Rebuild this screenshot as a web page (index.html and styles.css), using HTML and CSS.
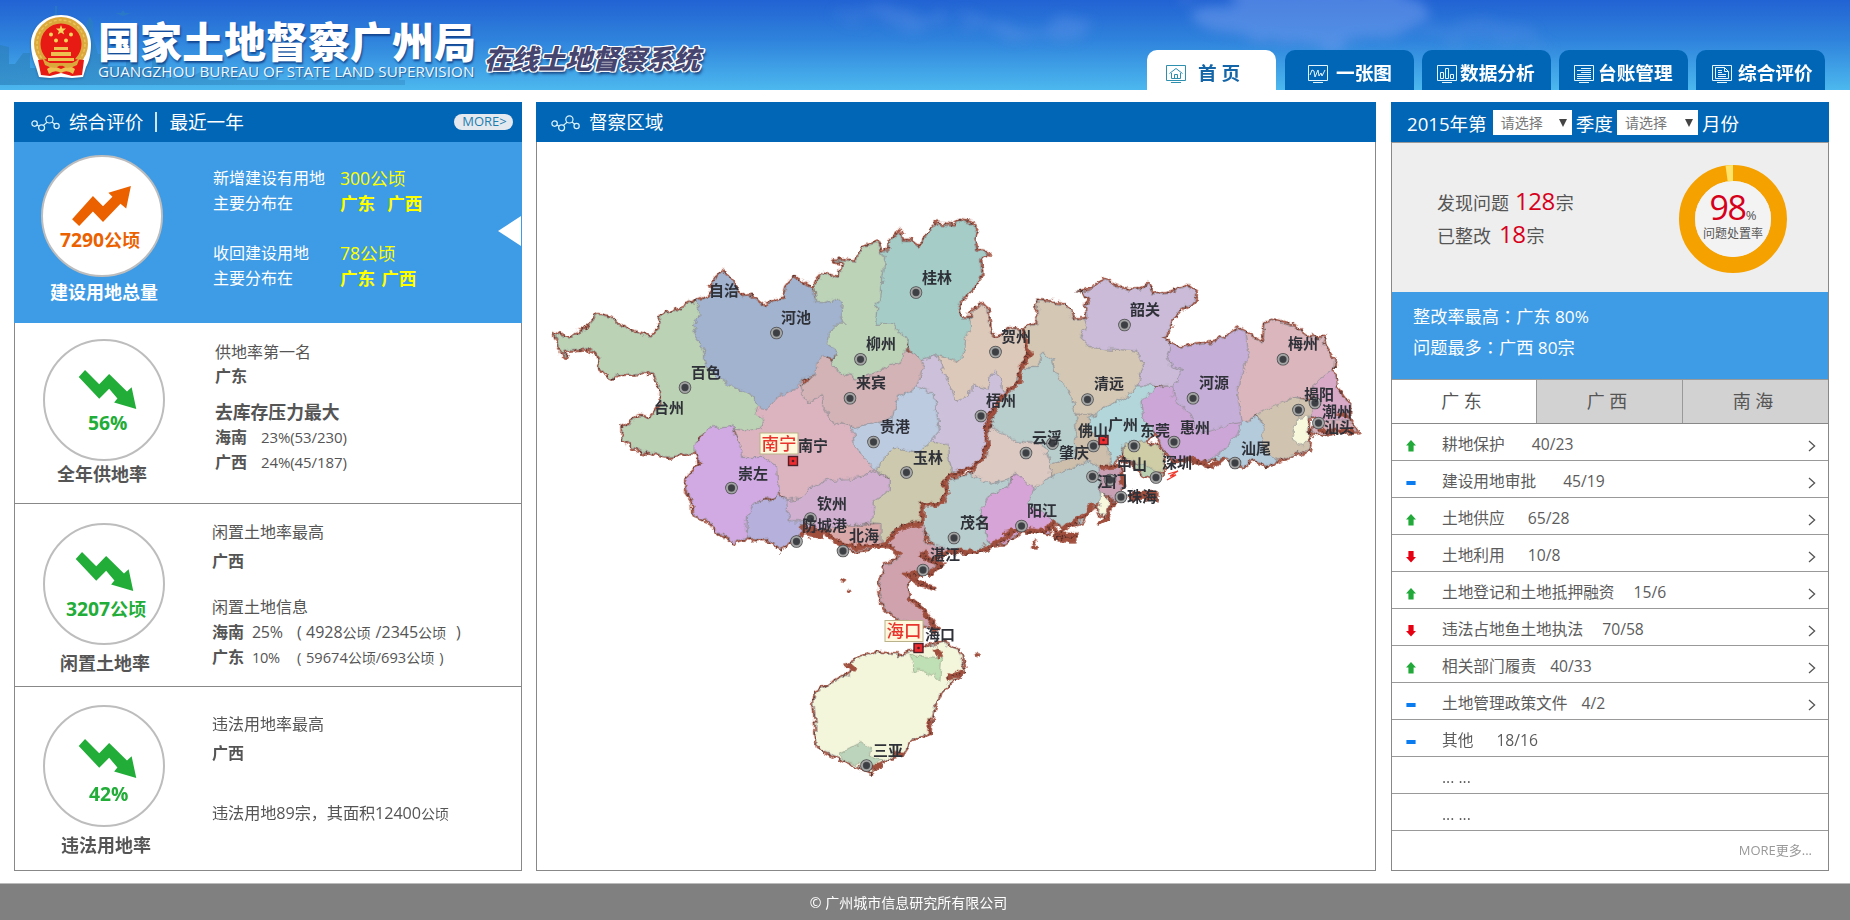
FILE: index.html
```html
<!DOCTYPE html>
<html lang="zh-CN">
<head>
<meta charset="utf-8">
<title>在线土地督察系统</title>
<link rel="stylesheet" href="styles.css">
</head>
<body>
<svg class="defs" width="0" height="0" aria-hidden="true">
  <defs>
    <symbol id="up" viewBox="0 0 175 119"><path d="M0 99 62 30 92 60 120 32 108 20 175 0 161 67 144 53 92 107 62 76 21 119Z"/></symbol>
    <symbol id="down" viewBox="0 0 174 118"><path d="M19 0 62 43 92 12 146 65 160 52 174 118 107 98 117 86 92 57 62 87 0 21Z"/></symbol>
    <symbol id="nodes" viewBox="0 0 29 17"><g fill="none" stroke="#d9f3ff" stroke-width="1.2"><circle cx="3.6" cy="8.6" r="2.7"/><circle cx="10.6" cy="12.8" r="3"/><circle cx="18.4" cy="4.4" r="3.6"/><circle cx="25.6" cy="11" r="2.6"/><path d="M6 10l2 1.2M12.4 10.4l3.6-3.2M21 7l2.8 2.4"/></g></symbol>
    <symbol id="chev" viewBox="0 0 8 12"><path d="M1 1l5.6 5L1 11" fill="none" stroke="#555" stroke-width="1.3"/></symbol>
    <symbol id="s-up" viewBox="0 0 10 12"><path d="M5 0l5 5.5H7.6V11.5H2.4V5.5H0z" fill="#22a93a"/></symbol>
    <symbol id="s-down" viewBox="0 0 10 12"><path d="M5 11.5l5-5.5H7.6V0H2.4V6H0z" fill="#e60012"/></symbol>
    <symbol id="s-flat" viewBox="0 0 10 12"><path d="M.4 4h9.2v4H.4z" fill="#0a7cf0"/></symbol>
  </defs>
</svg>

<header class="banner">
  <svg class="sky" width="1850" height="90" viewBox="0 0 1850 90">
    <defs>
      <linearGradient id="skyfill" x1="0" y1="0" x2="0" y2="1"><stop offset="0" stop-color="#2263d3"/><stop offset=".45" stop-color="#2f83dc"/><stop offset="1" stop-color="#4cb8ee"/></linearGradient>
      <linearGradient id="city" gradientUnits="userSpaceOnUse" x1="0" y1="0" x2="430" y2="0"><stop offset="0" stop-color="#2b7fb8" stop-opacity=".62"/><stop offset="1" stop-color="#2f86c0" stop-opacity=".42"/></linearGradient>
      <filter id="cloud" x="-20%" y="-60%" width="140%" height="220%"><feTurbulence type="fractalNoise" baseFrequency=".02 .05" numOctaves="4" seed="4"/><feDisplacementMap in="SourceGraphic" scale="40"/><feGaussianBlur stdDeviation="6"/></filter>
    </defs>
    <rect width="1850" height="90" fill="url(#skyfill)"/>
    <g filter="url(#cloud)" fill="#6f9bec" opacity=".55">
      <ellipse cx="1310" cy="14" rx="120" ry="28"/><ellipse cx="1030" cy="30" rx="70" ry="6" opacity=".6"/><ellipse cx="1480" cy="34" rx="60" ry="9" opacity=".4"/><ellipse cx="890" cy="16" rx="60" ry="5" opacity=".5"/>
    </g>
    <g fill="url(#city)">
      <path d="M0 45l9 2v17h6l8-11h7v15h26V50l4-12h5V25h4v13l6 10v10h10V30l2-8 3-5 3 5v14l5 18h10v12h18V54h12v14h14V58h14v20h24l10-6 9 8h12v-6h16v6h30l4-7 7 7h18l2-10h7v10h12v-9h6v9h14l3-7h17v7h14l2-7h26v7h6v5H0z"/>
      <path d="M55 6h2v9h8v2H52v-2h3zM115 13h6l2-3 2 3h6l-8 3z"/>
    </g>
  </svg>
  <div class="brand">
    <svg class="emblem" width="62" height="66" viewBox="0 0 62 66">
      <path d="M31 1C14 1 1 14 1 30c0 10 3 18 5 23l3 10 11 1 11-1 11 1 11-1 3-10c3-5 5-13 5-23C61 14 48 1 31 1z" fill="#fff"/>
      <circle cx="31" cy="30" r="27" fill="#dba83c"/>
      <circle cx="31" cy="30" r="24" fill="none" stroke="#ecc45a" stroke-width="1.500" stroke-dasharray="3 2"/>
      <circle cx="31" cy="30" r="20.500" fill="#e81a14"/>
      <path d="M8 46l10-1 13 7 13-7 10 1-2 15-10 1-11-3-11 3-9-1z" fill="#e81a14"/>
      <path d="M17 55q5-5 14 0 9-5 14 0l-2 5q-6-5-12-1-6-4-12 1zM18 44h26v3H18zM21 38h20v4H21zM24 33h14v3H24z" fill="#eec04f"/>
      <path d="M12 43q3 4 8 6l22 0q5-2 8-6l-3 8q-5 3-10 3l-6-3-6 3q-5 0-10-3z" fill="#dba83c"/>
      <path d="M31 11l1.300 3.600h3.800l-3 2.300 1.100 3.700-3.200-2.200-3.200 2.200 1.100-3.700-3-2.300h3.800z" fill="#f7d55c"/>
      <g fill="#f7d55c"><circle cx="21" cy="20.500" r="2"/><circle cx="41" cy="20.500" r="2"/><circle cx="26" cy="26.500" r="2"/><circle cx="36" cy="26.500" r="2"/></g>
    </svg>
    <div class="names">
      <h1 class="org">国家土地督察广州局</h1>
      <p class="org-en">GUANGZHOU BUREAU OF STATE LAND SUPERVISION</p>
    </div>
    <p class="system">在线土地督察系统</p>
  </div>
  <nav class="nav">
    <a class="tab tab-home active"><svg width="20" height="19" viewBox="0 0 20 19" class="ico"><path d="M.5.5h19v15H.5zM5 17.500h10M3.500 8.500L10 3.500l6.500 5M5.500 8v5.500h9V8M8.500 13.500v-4h3v4"/></svg><span>首 页</span></a>
    <a class="tab tab-map"><svg width="20" height="19" viewBox="0 0 20 19" class="ico"><path d="M.5.5h19v15H.5zM5 17.500h10M2 10l2-5 2 1 1 6 3-7 1 6 2-3 1 3 3-6"/></svg><span>一张图</span></a>
    <a class="tab tab-data"><svg width="20" height="19" viewBox="0 0 20 19" class="ico"><path d="M.5.5h19v15H.5zM5 17.500h10M3.500 7.500h3v6h-3zM8.500 3.500h3v10h-3zM13.500 9.500h3v4h-3z"/></svg><span>数据分析</span></a>
    <a class="tab tab-book"><svg width="20" height="19" viewBox="0 0 20 19" class="ico"><path d="M.5.5h19v15H.5zM5 17.500h10M7 3.500h10M3 5.500h14M7 7.500h10M3 9.500h14M3 11.500h14M3 13.500h14"/></svg><span>台账管理</span></a>
    <a class="tab tab-eval"><svg width="20" height="19" viewBox="0 0 20 19" class="ico"><path d="M.5.5h19v15H.5zM5 17.500h10M3.500 2.500h9l4 4v7h-13zM12.500 2.500v4h4M6 5.500h4M6 7.500h4M6 9.500h8M6 11.500h8"/></svg><span>综合评价</span></a>
  </nav>
</header>

<main class="board">
  <section class="panel evaluation">
    <div class="bar"><svg width="29" height="17" class="nodes"><use href="#nodes"/></svg><h2>综合评价</h2><i class="rule"></i><h2>最近一年</h2><a class="more">MORE&gt;</a></div>

    <article class="metric m1">
      <div class="gauge"><div class="ring"><svg class="trend" width="59" height="40"><use href="#up"/></svg><b class="val">7290<em>公顷</em></b></div><h3>建设用地总量</h3></div>
      <div class="facts">
        <p><span class="k">新增建设有用地</span><span class="v">300公顷</span></p>
        <p><span class="k">主要分布在</span><b class="v">广东<i></i>广西</b></p>
        <p class="gap25"><span class="k">收回建设用地</span><span class="v">78公顷</span></p>
        <p><span class="k">主要分布在</span><b class="v near">广东<i></i>广西</b></p>
      </div>
      <svg class="pointer" width="23" height="30" viewBox="0 0 23 30"><path d="M0 15L23 0v30z" fill="#fff"/></svg>
    </article>

    <article class="metric m2">
      <div class="gauge"><div class="ring"><svg class="trend" width="59" height="39"><use href="#down"/></svg><b class="val">56%</b></div><h3>全年供地率</h3></div>
      <div class="facts">
        <p>供地率第一名</p>
        <p class="tight"><b>广东</b></p>
        <p class="big"><b>去库存压力最大</b></p>
        <p><b>海南</b><span class="num">23%(53/230)</span></p>
        <p><b>广西</b><span class="num">24%(45/187)</span></p>
      </div>
    </article>

    <article class="metric m3">
      <div class="gauge"><div class="ring"><svg class="trend" width="59" height="39"><use href="#down"/></svg><b class="val">3207<em>公顷</em></b></div><h3>闲置土地率</h3></div>
      <div class="facts">
        <p>闲置土地率最高</p>
        <p class="gap4"><b>广西</b></p>
        <p class="gap21">闲置土地信息</p>
        <p><b>海南</b><span class="rate">25%</span><span class="l">(</span><span>4928<small>公顷</small></span><span class="s1">/2345<small>公顷</small></span><span class="r">)</span></p>
        <p class="fine"><b>广东</b><span class="rate">10%</span><span class="l">(</span><span>59674<small>公顷</small>/693<small>公顷</small></span><span class="r">)</span></p>
      </div>
    </article>

    <article class="metric m4">
      <div class="gauge"><div class="ring"><svg class="trend" width="59" height="39"><use href="#down"/></svg><b class="val">42%</b></div><h3>违法用地率</h3></div>
      <div class="facts">
        <p>违法用地率最高</p>
        <p class="gap4"><b>广西</b></p>
        <p class="gap35">违法用地89宗，其面积12400<small>公顷</small></p>
      </div>
    </article>
  </section>

  <section class="panel region">
    <div class="bar"><svg width="29" height="17" class="nodes"><use href="#nodes"/></svg><h2>督察区域</h2></div>
    <svg class="map" width="838" height="728" viewBox="537 142 838 728">
      <defs>
        <filter id="rough" x="-5%" y="-5%" width="110%" height="110%"><feTurbulence type="fractalNoise" baseFrequency=".13" numOctaves="3" seed="7"/><feDisplacementMap in="SourceGraphic" scale="8" xChannelSelector="R" yChannelSelector="G"/></filter>
        <g id="areas">
          <g transform="translate(540 200) scale(.33333)">
            <path fill="#bcd2b4" d="M42 398L85 413 140 380 172 342 210 350 235 375 325 410 358 385 360 345 440 315 465 300 480 340 455 378 470 410 490 460 500 505 550 545 600 570 640 590 650 620 645 640 670 660 665 680 620 690 580 685 575 672 500 685 470 710 465 755 385 768 300 752 245 715 245 680 300 645 325 655 358 615 360 570 340 515 235 520 215 530 180 515 170 460 145 445 75 450 72 465 50 430Z"/>
            <path fill="#a2b3cf" d="M465 300L500 290 525 255 510 250 545 212 570 240 600 290 630 285 665 315 730 295 735 260 760 230 815 265 825 305 855 305 890 295 905 310 900 340 910 370 885 370 865 405 860 430 890 450 875 475 850 465 830 480 825 520 780 540 770 560 710 590 680 625 650 620 640 590 600 570 550 545 500 505 490 460 470 410 455 378 480 340Z"/>
            <path fill="#bcd3b8" d="M820 260L840 220 895 232 905 185 880 178 945 185 965 140 1010 125 1020 158 1035 165 1025 240 1020 290 1008 310 1005 370 1060 370 1080 400 1105 415 1095 450 1085 485 1050 490 1000 520 950 532 900 520 875 485 890 450 860 430 865 405 885 370 910 370 900 340 905 310 890 295 855 305 825 305Z"/>
            <path fill="#a5ccc6" d="M1020 158L1045 145 1045 125 1075 92 1085 120 1110 120 1135 138 1160 100 1190 68 1240 75 1258 60 1290 68 1308 80 1298 110 1308 150 1345 155 1318 170 1322 225 1295 265 1265 295 1252 320 1258 352 1290 352 1292 385 1275 410 1270 460 1250 480 1190 465 1140 480 1105 440 1105 415 1080 400 1060 370 1005 370 1008 310 1020 290 1025 240 1035 165Z"/>
            <path fill="#ddc9ba" d="M1290 352L1290 335 1325 312 1340 325 1350 405 1375 408 1405 385 1450 385 1455 430 1468 460 1440 500 1435 545 1415 570 1385 570 1380 530 1365 510 1345 530 1340 565 1305 555 1250 605 1230 560 1210 510 1190 465 1250 480 1270 460 1275 410 1292 385Z"/>
            <path fill="#cdc0da" d="M1140 480L1190 465 1210 510 1230 560 1250 605 1305 555 1340 565 1345 530 1365 510 1380 530 1385 570 1415 570 1360 620 1340 660 1335 730 1320 770 1290 795 1235 815 1220 730 1170 720 1195 690 1180 580 1130 560 1150 500Z"/>
            <path fill="#d3b3b6" d="M830 480L850 465 875 485 900 520 950 532 1000 520 1050 490 1085 485 1090 450 1110 450 1140 480 1150 500 1130 560 1070 590 1055 650 990 670 935 680 875 665 850 625 845 585 795 605 780 560 825 520Z"/>
            <path fill="#dbb4c0" d="M780 540L780 560 795 605 845 585 850 625 875 665 935 680 940 730 975 780 1005 808 960 830 910 840 860 840 810 860 785 890 740 900 715 870 710 800 670 770 605 770 600 735 580 685 620 690 665 680 670 660 645 640 650 620 680 625 710 590 770 560Z"/>
            <path fill="#bccbe0" d="M935 680L990 670 1055 650 1070 590 1130 560 1180 580 1195 690 1170 720 1130 755 1060 740 1030 770 1005 808 975 780 940 730Z"/>
            <path fill="#ccc9ae" d="M1060 740L1130 755 1170 720 1220 730 1235 815 1210 850 1220 890 1200 912 1145 910 1145 965 1065 985 1045 1030 1020 1020 1020 968 995 965 1000 900 1045 870 1045 830 1005 808 1030 770Z"/>
            <path fill="#d0afd0" d="M740 900L785 890 810 860 860 840 960 830 1005 808 1045 835 1045 870 1000 900 995 965 900 975 860 985 790 985 780 960 745 960Z"/>
            <path fill="#b6b0dc" d="M615 1015L620 940 635 910 700 895 715 880 740 900 745 960 780 960 785 1000 745 1020 720 1045 680 1015Z"/>
            <path fill="#d9a8a8" d="M860 985L900 975 1020 968 1020 1020 985 1045 930 1050 880 1020Z"/>
            <path fill="#d1aae3" d="M465 730L500 685 575 672 580 700 600 735 605 770 670 770 710 800 715 880 635 910 620 940 615 1015 580 1025 520 985 515 965 460 945 458 900 435 870 440 830 480 790 465 755Z"/>
          </g>
          <g transform="translate(940 200) scale(.33333)">
            <path fill="#d4c7b4" d="M290 300L375 310 395 355 440 355 420 410 450 440 590 450 608 495 590 555 560 590 500 615 460 640 405 640 395 590 370 550 340 510 335 475 305 460 290 500 240 500 268 460 255 430 250 385 290 370Z"/>
            <path fill="#cbbbd8" d="M420 275L450 270 485 235 520 255 560 268 600 268 620 252 635 280 680 280 740 258 765 275 765 300 720 325 695 360 680 395 662 405 690 430 680 460 690 500 730 510 695 555 590 555 608 495 590 450 450 440 420 410 440 355 435 310 450 290Z"/>
            <path fill="#c5aed7" d="M690 430L720 440 820 425 895 385 915 395 925 460 905 520 890 580 905 665 870 670 830 700 780 700 750 640 700 590 695 555 730 510 690 500 680 460Z"/>
            <path fill="#dbb7bd" d="M915 395L965 430 975 370 1000 358 1060 375 1100 410 1155 408 1145 430 1180 480 1178 505 1120 550 1115 590 1060 590 1000 620 950 640 905 665 890 580 905 520 925 460Z"/>
            <path fill="#d8aac8" d="M1178 505L1185 560 1225 610 1225 660 1140 665 1105 640 1115 590 1120 550Z"/>
            <path fill="#d0c4b0" d="M950 640L1060 590 1115 600 1110 650 1070 655 1055 715 1110 725 1105 745 1010 780 965 750 965 670Z"/>
            <path fill="#f7f8dc" d="M1070 650L1105 645 1100 690 1110 720 1080 735 1055 715Z"/>
            <path fill="#d8b0ba" d="M1140 660L1225 660 1250 692 1190 690 1130 705 1110 690Z"/>
            <path fill="#b4cbdc" d="M800 780L850 745 895 690 905 665 950 645 970 680 965 750 1010 780 975 795 940 770 905 800 850 765Z"/>
            <path fill="#cca6d6" d="M600 600L640 560 695 555 700 590 750 640 780 700 870 670 905 665 895 690 850 745 800 780 700 780 670 750 640 690 605 650Z"/>
            <path fill="#b3d6da" d="M460 640L500 615 560 590 590 555 635 555 640 570 600 600 605 650 640 690 620 720 550 730 540 760 510 795 500 740 450 690 440 650Z"/>
            <path fill="#b8cecd" d="M150 680L170 610 215 570 240 500 290 500 305 460 335 475 340 510 370 550 395 590 405 640 405 680 405 715 400 770 330 790 305 730 230 720 170 700Z"/>
            <path fill="#dcc9c2" d="M150 680L230 720 305 730 330 790 325 830 280 865 225 815 210 835 150 850 90 820 140 765Z"/>
            <path fill="#cdbfac" d="M405 640L460 640 440 650 450 690 500 740 510 800 475 800 440 780 400 800 325 830 330 790 400 770 405 710Z"/>
            <path fill="#b7cbcd" d="M325 830L400 800 440 780 475 800 475 850 480 900 440 935 430 960 370 980 330 950 260 910 280 865Z"/>
            <path fill="#c8a0b4" d="M475 800L540 800 545 860 520 900 480 870Z"/>
            <path fill="#f7f8dc" d="M482 870L507 905 492 945 470 935Z"/>
            <path fill="#cfcda6" d="M550 730L620 720 665 750 670 810 640 820 600 790 545 775Z"/>
            <path fill="#b9cfb0" d="M575 790L600 790 665 820 640 838 610 825Z"/>
            <path fill="#d6a4d6" d="M225 815L280 865 260 910 330 950 325 1000 250 985 190 1030 150 1035 135 990 120 930 150 880 200 860Z"/>
            <path fill="#b7cdce" d="M90 820L150 850 210 835 200 860 150 880 120 930 145 1030 100 1050 30 1050-20 1040-55 970-55 910 0 910 20 880 15 840Z"/>
          </g>
          <g transform="translate(740 500) scale(.33333)">
            <path fill="#cfa2ad" d="M470 80L545 70 555 130 620 140 600 180 555 215 500 240 505 290 545 330 575 380 470 355 430 320 415 270 430 190 470 180 475 150 440 125Z"/>
            <path fill="#f4f6dc" d="M605 425L660 460 670 515 625 545 600 570 575 640 570 690 510 720 485 760 425 780 390 815 310 780 230 740 220 600 225 575 340 510 320 490 400 455 475 465 535 445Z"/>
          </g>
        </g>
      </defs>
      <g filter="url(#rough)" transform="translate(.8 .8)">
        <use href="#areas" stroke="#a85644" stroke-width="13" stroke-linejoin="round"/>
        <use href="#areas" stroke="#5a3029" stroke-width="11" stroke-dasharray="4 13"/>
        <use href="#areas" stroke="#8f8f94" stroke-width="2.200"/>
        <g transform="translate(740 500) scale(.33333)" stroke="#8f9a80" stroke-width="2"><path fill="#bfdfb5" d="M505 465L605 470 600 540 545 510 520 510Z"/><path fill="#bcd4bc" d="M295 760L340 735 360 725 390 745 385 765 425 775 385 800 310 780Z"/></g>
        <g id="coast" fill="none" stroke="#a04f3e" stroke-linejoin="round" transform="translate(940 200) scale(.33333)">
          <path stroke-width="13" d="M250 385L255 430 268 460 240 500 235 545 180 590 150 640 135 680 140 730 120 780 90 800 30 825 10 845 20 880 0 910-55 910-55 965-130 985-145 1010-175 1030"/>
          <path stroke-width="14" d="M-415 970L-390 1000-350 985-320 1020-260 1040-200 1035-150 1040-120 1060M-55 1050L-30 1080 0 1060 60 1050 110 1055 150 1035 200 1010 220 990M190 1000L240 985 310 995 340 960 345 1010 400 1000M340 1010L390 970 440 940 455 910M520 900L500 950 470 970M480 800L540 795 550 860M690 780L760 775 810 800 850 770M1130 690L1240 690M1190 640L1225 650"/>
          <path stroke-width="30" d="M570 885L650 885M350 1010L410 1010M-420 990L-350 1000"/>
        </g>
        <g fill="none" stroke="#a04f3e" transform="translate(740 500) scale(.33333)">
          <path stroke-width="16" d="M540 160L565 180 600 190 570 220 500 220 530 245 585 265M500 290L540 320 570 360 590 390M585 440L600 470M320 490L345 510M620 530L670 515M565 650L565 700M385 800L425 795M460 760L490 760"/>
          <path stroke-width="14" d="M302 235L312 245M704 468L716 458M322 264L326 270M875 120L885 124M874 138L888 140"/>
        </g>
        <g fill="none" stroke="#4a2a26" stroke-width="5" stroke-dasharray="4 9" transform="translate(940 200) scale(.33333)">
          <path d="M246 385L251 430 264 460 236 500 231 545 176 590 146 640 131 680 136 730 116 780 86 800 26 825 6 845 16 880-4 906-59 906-59 961-134 981-149 1006"/>
          <path d="M-415 966L-390 996-350 981-320 1016-260 1036-200 1031-150 1036M-55 1054L-30 1084 0 1064 60 1054 110 1059 150 1039 200 1014M190 1004L240 989 310 999 340 964 345 1014 400 1004M340 1014L390 974 440 944M520 904L500 954M480 796L540 791M690 784L760 779 810 804M1130 694L1240 694M570 880L650 890M350 1014L410 1006"/>
          <path d="M-60 1064L-35 1084 0 1094-30 1124-100 1120-70 1145-15 1165M-100 1190L-60 1220-30 1260-10 1290M20 1430L70 1415M-35 1550L-35 1600"/>
        </g>
      </g>
      <g class="cities">
        <g class="dot">
          <g id="dots"><circle cx="916" cy="292.500"/><circle cx="776.500" cy="333"/><circle cx="860.500" cy="359.300"/><circle cx="685" cy="387.500"/><circle cx="850" cy="398.300"/><circle cx="873.500" cy="442"/><circle cx="906.500" cy="472.500"/><circle cx="731.500" cy="488"/><circle cx="810.500" cy="518.500"/><circle cx="796.500" cy="541.500"/><circle cx="843" cy="551"/><circle cx="954" cy="538"/><circle cx="923" cy="570"/><circle cx="995.500" cy="352"/><circle cx="981" cy="416"/><circle cx="1124.500" cy="325"/><circle cx="1087.500" cy="399.500"/><circle cx="1193" cy="398.300"/><circle cx="1283" cy="359.300"/><circle cx="1298.500" cy="410"/><circle cx="1315" cy="403"/><circle cx="1318.500" cy="423"/><circle cx="1026" cy="453"/><circle cx="1052.500" cy="443.500"/><circle cx="1093.500" cy="446"/><circle cx="1134" cy="446"/><circle cx="1174" cy="442"/><circle cx="1235" cy="463"/><circle cx="1092.500" cy="476.500"/><circle cx="1110" cy="480"/><circle cx="1156" cy="477.500"/><circle cx="1021.500" cy="526"/><circle cx="1121" cy="497"/><circle cx="866.500" cy="765.500"/></g>
        </g>
        <use href="#dots" class="dot-face"/>
        <g class="seat"><rect x="788.500" y="456.500" width="9" height="9"/><rect x="1099" y="435.500" width="9" height="9"/><rect x="914" y="643.500" width="9" height="9"/></g>
        <g fill="#4a2128"><circle cx="793" cy="461" r="1.300"/><circle cx="1103.500" cy="440" r="1.300"/><circle cx="918.500" cy="648" r="1.300"/></g>
      </g>
      <path d="M1168 474l10-3-8 5 6-1-9 5" fill="none" stroke="#f03a2e" stroke-width="1.300"/>
      <g class="names-map">
        <text x="922" y="283">桂林</text><text x="709" y="296">自治</text><text x="781" y="323">河池</text><text x="866" y="349">柳州</text><text x="691" y="378">百色</text><text x="654" y="413">台州</text><text x="856" y="388">来宾</text><text x="880" y="432">贵港</text><text x="798" y="451">南宁</text><text x="913" y="463">玉林</text><text x="738" y="479">崇左</text><text x="817" y="509">钦州</text><text x="802" y="531">防城港</text><text x="849" y="541">北海</text><text x="960" y="528">茂名</text><text x="930" y="560">湛江</text><text x="1001" y="342">贺州</text><text x="986" y="406">梧州</text><text x="1130" y="315">韶关</text><text x="1094" y="389">清远</text><text x="1199" y="388">河源</text><text x="1288" y="349">梅州</text><text x="1304" y="400">揭阳</text><text x="1322" y="417">潮州</text><text x="1324" y="433">汕头</text><text x="1108" y="430">广州</text><text x="1078" y="436">佛山</text><text x="1032" y="443">云浮</text><text x="1059" y="458">肇庆</text><text x="1140" y="436">东莞</text><text x="1180" y="433">惠州</text><text x="1241" y="454">汕尾</text><text x="1117" y="470">中山</text><text x="1162" y="468">深圳</text><text x="1097" y="487">江门</text><text x="1127" y="502">珠海</text><text x="1027" y="516">阳江</text><text x="925" y="640">海口</text><text x="873" y="756">三亚</text>
      </g>
      <g class="flags">
        <rect x="760" y="433" width="38" height="21"/><text x="761.500" y="449.500">南宁</text>
        <rect x="885" y="620.500" width="38" height="21"/><text x="886.500" y="637">海口</text>
      </g>
    </svg>
  </section>

  <section class="panel progress">
    <div class="bar"><span>2015年第</span><span class="select s-a">请选择<i></i></span><span>季度</span><span class="select s-b">请选择<i></i></span><span>月份</span></div>
    <div class="summary">
      <div class="found"><p>发现问题<strong>128</strong>宗</p><p>已整改<strong class="wide">18</strong>宗</p></div>
      <div class="donut">
        <svg width="108" height="108" viewBox="0 0 108 108"><circle cx="54" cy="54" r="46" fill="none" stroke="#f5a100" stroke-width="16"/><circle cx="54" cy="54" r="38" fill="#f3f3f3"/><path d="M46.500 .5A54 54 0 0 1 54 0V16a38 38 0 0 0-5.300.400z" fill="#ffe36b"/></svg>
        <div class="pct"><p><strong>98</strong>%</p><small>问题处置率</small></div>
      </div>
    </div>
    <div class="best"><p>整改率最高<span class="colon" lang="zh-TW">：</span>广东 80%</p><p>问题最多<span class="colon" lang="zh-TW">：</span>广西 80宗</p></div>
    <div class="provinces"><a class="on">广 东</a><a>广 西</a><a>南 海</a></div>
    <ul class="items">
      <li><svg class="st"><use href="#s-up"/></svg><span class="g28">耕地保护</span>40/23<svg class="go"><use href="#chev"/></svg></li>
      <li><svg class="st"><use href="#s-flat"/></svg><span class="g28">建设用地审批</span>45/19<svg class="go"><use href="#chev"/></svg></li>
      <li><svg class="st"><use href="#s-up"/></svg><span class="g24">土地供应</span>65/28<svg class="go"><use href="#chev"/></svg></li>
      <li><svg class="st"><use href="#s-down"/></svg><span class="g24">土地利用</span>10/8<svg class="go"><use href="#chev"/></svg></li>
      <li><svg class="st"><use href="#s-up"/></svg><span class="g20">土地登记和土地抵押融资</span>15/6<svg class="go"><use href="#chev"/></svg></li>
      <li><svg class="st"><use href="#s-down"/></svg><span class="g20">违法占地鱼土地执法</span>70/58<svg class="go"><use href="#chev"/></svg></li>
      <li><svg class="st"><use href="#s-up"/></svg><span class="g14">相关部门履责</span>40/33<svg class="go"><use href="#chev"/></svg></li>
      <li><svg class="st"><use href="#s-flat"/></svg><span class="g14">土地管理政策文件</span>4/2<svg class="go"><use href="#chev"/></svg></li>
      <li><svg class="st"><use href="#s-flat"/></svg><span class="g24">其他</span>18/16</li>
      <li class="blank">... ...</li>
      <li class="blank">... ...</li>
    </ul>
    <a class="more-items">MORE更多...</a>
  </section>
</main>

<footer class="foot">© 广州城市信息研究所有限公司</footer>
</body>
</html>
```
FILE: styles.css
```css
* { box-sizing: border-box; }
body { margin: 0; width: 1850px; height: 920px; overflow: hidden; background: #fff; color: #555; font-family: "Open Sans", "Noto Sans CJK SC", sans-serif; font-size: 16px; display: flex; flex-direction: column; }
h1, h2, h3, p, ul { margin: 0; padding: 0; }
i, em { font-style: normal; }
.defs { position: absolute; }

.banner { position: relative; height: 90px; display: flex; justify-content: space-between; flex: none; overflow: hidden; }
.sky { position: absolute; left: 0; top: 0; }
.brand { position: relative; display: flex; padding-left: 30px; }
.emblem { margin-top: 14px; flex: none; filter: drop-shadow(0 1px 1px rgba(20, 60, 120, .5)); }
.names { margin-left: 6px; padding-top: 17px; width: 378px; }
.org { font-family: "Noto Sans CJK SC", sans-serif; font-weight: 900; font-size: 42px; line-height: 46px; white-space: nowrap; color: #fff; text-shadow: 1px 2px 2px rgba(10, 50, 120, .75); }
.org-en { font-size: 15.200px; line-height: 16px; letter-spacing: .05px; white-space: nowrap; color: #eef8ff; text-shadow: 1px 1px 1px rgba(10, 50, 120, .6); }
.system { margin: 39px 0 0 8px; font-family: "Noto Sans CJK SC", sans-serif; font-size: 27px; line-height: 38px; font-weight: 900; font-style: italic; color: #46456f; white-space: nowrap; text-shadow: -1px -1px 0 #fff, 1px -1px 0 #fff, -1px 1px 0 #fff, 1px 1px 0 #fff, 0 -1.500px 0 #fff, 1.500px 0 0 #fff, -1.500px 0 0 #fff, 2px 3px 3px rgba(10, 40, 100, .8); }

.nav { position: relative; display: flex; gap: 8px; padding: 50px 25px 0 0; }
.tab { width: 129px; height: 40px; border-radius: 10px 10px 0 0; background: #0066b5; color: #fff; font-weight: 700; font-size: 18.670px; line-height: 46px; display: flex; white-space: nowrap; }
.tab.active { background: #fff; color: #1466a8; margin-right: 1px; }
.ico { margin-top: 15px; fill: none; stroke: #e4f6ff; stroke-width: 1; flex: none; }
.tab.active .ico { stroke: #2f8fae; }
.tab-home { padding-left: 19px; gap: 12px; }
.tab-map { padding-left: 23px; gap: 8px; }
.tab-data { padding-left: 15px; gap: 3px; }
.tab-book { padding-left: 15px; gap: 4px; }
.tab-eval { padding-left: 16px; gap: 6px; }

.board { display: flex; padding: 12px 0 0 14px; height: 793px; flex: none; }
.panel { border: 1px solid #888; height: 769px; display: flex; flex-direction: column; }
.evaluation { width: 508px; margin-right: 14px; }
.region { width: 840px; margin-right: 15px; }
.progress { width: 438px; }
.bar { height: 40px; margin: -1px -1px 0; background: #0066b5; color: #fff; display: flex; align-items: center; padding-left: 17px; flex: none; font-size: 18.600px; }
.bar h2 { font-size: 18.600px; font-weight: 400; line-height: 40px; }
.nodes { margin: 2px 9px 0 0; }
.region .bar { padding-left: 15px; }
.rule { width: 2px; height: 20px; background: #cfe6f7; margin: 0 12px; }
.more { margin: 0 9px 0 auto; width: 59px; height: 16px; border-radius: 8px; background: #e4e9ef; color: #1d7dae; font-size: 13px; line-height: 15px; text-align: center; padding-left: 2px; }

.metric { position: relative; display: flex; border-bottom: 1px solid #888; height: 183px; flex: none; }
.metric .gauge { width: 180px; flex: none; }
.ring { width: 122px; height: 122px; border: 2px solid #bdbdbd; border-radius: 50%; background: #fff; }
.trend { display: block; fill: #22ac38; }
.val { display: block; color: #22ac38; font-size: 19.300px; line-height: 24px; white-space: nowrap; }
.val em { font-size: 18px; }
.gauge h3 { font-size: 18px; line-height: 24px; font-weight: 700; white-space: nowrap; }
.facts { white-space: nowrap; }
.facts p { height: 25px; line-height: 25px; display: flex; }
.facts b { font-weight: 700; }
.facts .gap25 { margin-top: 25px; }
.facts .gap4 { margin-top: 4px; }
.facts .gap21 { margin-top: 21px; }
.facts .gap35 { margin-top: 35px; font-size: 16.200px; display: block; letter-spacing: -.1px; }

.m1 { height: 181px; margin: 0 -1px; background: #3e9be6; border: 0; color: #fff; }
.m1 .gauge { width: 199px; padding: 13px 0 0 27px; }
.m1 .trend { margin: 29px 0 0 29px; fill: #eb6100; }
.m1 .val { color: #eb6100; margin: 2px 0 0 17px; }
.m1 h3 { margin: 3px 0 0 9px; color: #fff; }
.m1 .facts { padding-top: 24px; }
.m1 .k { width: 127px; }
.m1 .v { color: #ffff00; font-size: 17.600px; }
.m1 .v i { display: inline-block; width: 12px; }
.m1 .v.near i { width: 6px; }
.pointer { position: absolute; right: 1px; top: 74px; }

.m2 { height: 181px; }
.m2 .gauge { width: 200px; padding: 16px 0 0 28px; }
.m2 .trend { margin: 29px 0 0 33px; }
.m2 .val { margin: 2px 0 0 43px; }
.m2 h3 { margin: 1px 0 0 14px; }
.m2 .facts { padding-top: 17px; }
.m2 .tight { height: 26px; line-height: 22px; }
.m2 .big { font-size: 17.800px; margin-top: 9px; }
.num { margin-left: 14px; font-size: 15px; letter-spacing: -.1px; }

.m3 .gauge { width: 197px; padding: 19px 0 0 28px; }
.m3 .trend { margin: 27px 0 0 30px; }
.m3 .val { margin: 6px 0 0 21px; }
.m3 h3 { margin: 6px 0 0 17px; }
.m3 .facts { padding-top: 16px; }
.facts small { font-size: 14px; }
.rate { margin-left: 8px; width: 45px; letter-spacing: -.3px; }
.l { width: 9px; }
.s1 { margin-left: 5px; }
.r { margin-left: 10px; }
.fine { font-size: 14.600px; }
.fine b { font-size: 16px; }
.fine .r { margin-left: 5px; }

.m4 { border: 0; }
.m4 .gauge { width: 197px; padding: 18px 0 0 28px; }
.m4 .trend { margin: 32px 0 0 33px; }
.m4 .val { margin: 4px 0 0 44px; }
.m4 h3 { margin: 6px 0 0 18px; }
.m4 .facts { padding-top: 25px; }

.map { display: block; }
.dot circle, #dots circle { r: 4.600px; }
.dot { fill: #3c3f44; stroke: #4b4b4d; stroke-width: 3.400; }
.dot-face { fill: none; stroke: #a4a6a6; stroke-width: 1.900; }
.seat rect { fill: #ee2b2f; stroke: #4a2128; stroke-width: 1.400; }
.names-map text { font-family: "Noto Sans CJK SC", sans-serif; font-weight: 700; font-size: 15px; fill: #2f3138; }
.flags rect { fill: #fff8dc; stroke: #b9b28a; }
.flags text { font-family: "Noto Sans CJK SC", sans-serif; font-weight: 500; font-size: 17.500px; fill: #e8342c; }

.progress .bar { padding-left: 16px; white-space: nowrap; }
.select { height: 25px; margin: 1px 4px 0 6px; padding: 0 5px 0 8px; background: #fff; color: #777; font-size: 14px; line-height: 25px; display: flex; align-items: center; justify-content: space-between; }
.s-a { width: 79px; }
.s-b { width: 81px; margin-left: 4px; }
.select i { border: 4px solid transparent; border-top: 8px solid #444; border-bottom: 0; }
.summary { height: 150px; background: #eee; display: flex; flex: none; justify-content: space-between; border-top: 1px solid #999; }
.found { padding: 41px 0 0 45px; font-size: 18px; }
.found p { height: 33px; line-height: 33px; display: flex; align-items: baseline; }
.found strong { font-weight: 400; font-size: 24px; color: #d7001b; margin: 0 1px 0 6px; letter-spacing: -.5px; }
.found .wide { margin-left: 8px; }
.donut { position: relative; width: 108px; height: 108px; margin: 22px 41px 0 0; }
.donut svg { display: block; }
.pct { position: absolute; inset: 23px 0 0 0; text-align: center; }
.pct p { height: 38px; line-height: 38px; font-size: 13px; }
.pct strong { font-weight: 400; font-size: 34px; letter-spacing: -1.300px; color: #d7001b; }
.pct small { display: block; font-size: 12px; line-height: 16px; white-space: nowrap; }
.best { height: 87px; flex: none; background: #3e9be6; color: #fff; font-size: 17.200px; line-height: 30px; padding: 9px 0 0 21px; }
.colon { font-family: "Noto Sans CJK TC", sans-serif; }
.provinces { display: flex; height: 45px; flex: none; border-top: 1px solid #999; border-bottom: 1px solid #888; font-size: 18px; line-height: 43px; text-align: center; }
.provinces a { flex: 1; background: #d2d2d2; border-left: 1px solid #999; padding-right: 5px; }
.provinces a.on { background: #fff; border: 0; flex: 0 0 144px; }
.items { list-style: none; font-size: 15.700px; }
.items li { height: 37px; border-bottom: 1px solid #999; display: flex; line-height: 41px; padding-left: 14px; color: #5c5c5c; }
.st { width: 10px; height: 12px; margin: 16px 26px 0 0; flex: none; }
.go { width: 8px; height: 12px; margin: 16px 12px 0 auto; }
.g28 { margin-right: 27px; }
.g24 { margin-right: 23px; }
.g20 { margin-right: 19px; }
.g14 { margin-right: 14px; }
.items .blank { padding-left: 50px; line-height: 40px; }
.more-items { text-align: right; padding-right: 16px; font-size: 13px; line-height: 39px; color: #999; }

.foot { height: 37px; background: #808080; color: #fff; font-size: 14px; line-height: 37px; text-align: center; padding-right: 33px; flex: none; border-top: 1px solid #bbb; }
```
